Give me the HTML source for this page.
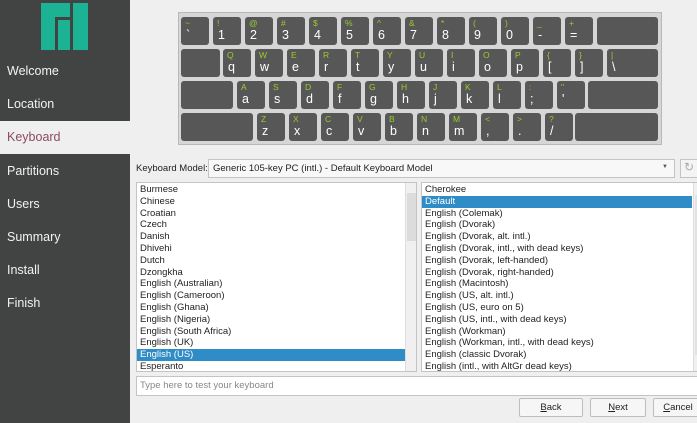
<!DOCTYPE html>
<html><head><meta charset="utf-8">
<style>
*{box-sizing:border-box;margin:0;padding:0}
body{width:697px;height:423px;overflow:hidden;background:#efefef;font-family:"Liberation Sans",sans-serif;position:relative}
.sb{position:absolute;left:0;top:0;width:130px;height:423px;background:#424443}
.nav{position:absolute;left:7px;font-size:12.5px;color:#f2f2f2}
.sel{position:absolute;left:0;top:121px;width:130px;height:33px;background:#efefef}
.kb{position:absolute;left:178px;top:12px;width:484px;height:133px;background:#d6d6d6;border:1px solid #b8b8b8}
.k{position:absolute;width:28px;height:28px;background:#575757;border-radius:3px;color:#fff}
.k .u{position:absolute;left:4px;top:1px;font-size:8.5px;color:#9ccc2c}
.k .l{position:absolute;left:5px;top:11px;font-size:12.5px}
.lbl{position:absolute;font-size:9.5px;color:#222}
.box{position:absolute;background:#fff;border:1px solid #c4c4c4}
.it{position:absolute;left:3px;font-size:9.5px;color:#222;white-space:nowrap;height:12px;line-height:12px}
.hl{position:absolute;background:#308cc6;height:12px}
.btn{position:absolute;top:398px;height:19px;background:#f6f6f6;border:1px solid #bdbdbd;border-radius:2px;font-size:9.5px;text-align:center;line-height:17px;color:#222}
</style></head><body>
<div class="sb"></div>
<svg style="position:absolute;left:41px;top:3px" width="47" height="47"><rect x="0" y="0" width="14" height="47" fill="#1bb394"/><rect x="0" y="0" width="29" height="14" fill="#1bb394"/><rect x="17" y="17" width="12" height="30" fill="#1bb394"/><rect x="32" y="0" width="15" height="47" fill="#1bb394"/></svg>
<div class="sel"></div>
<div class="nav" style="top:64px">Welcome</div>
<div class="nav" style="top:97px">Location</div>
<div class="nav" style="top:130px;color:#8e4b5e">Keyboard</div>
<div class="nav" style="top:164px">Partitions</div>
<div class="nav" style="top:197px">Users</div>
<div class="nav" style="top:230px">Summary</div>
<div class="nav" style="top:263px">Install</div>
<div class="nav" style="top:296px">Finish</div>

<div class="kb"></div>
<div id="keys"></div>

<div class="lbl" style="left:136px;top:163px">Keyboard Model:</div>
<div class="box" style="left:208px;top:159px;width:467px;height:19px;background:#f8f8f8"><span class="it" style="top:3px;left:4px">Generic 105-key PC (intl.)  -  Default Keyboard Model</span><span style="position:absolute;right:6px;top:4px;font-size:6px;color:#555">▼</span></div>
<div class="box" style="left:680px;top:159px;width:20px;height:19px;background:#f4f4f4"><span style="position:absolute;left:3px;top:0;font-size:12px;color:#aaa">↻</span></div>

<div class="box" style="left:136px;top:182px;width:281px;height:190px" id="L">
 <div style="position:absolute;right:0;top:0;width:11px;height:188px;background:#f0f0f0;border-left:1px solid #ddd"><div style="position:absolute;left:1px;top:10px;width:9px;height:48px;background:#dcdcdc"></div></div>
</div>
<div class="box" style="left:421px;top:182px;width:280px;height:190px" id="R">
 <div style="position:absolute;left:271px;top:0;width:10px;height:188px;background:#f0f0f0;border-left:1px solid #ddd"><div style="position:absolute;left:1px;top:12px;width:8px;height:160px;background:#e2e2e2"></div></div>
</div>

<div class="box" style="left:136px;top:376px;width:565px;height:20px"><span class="it" style="top:3px;color:#888">Type here to test your keyboard</span></div>
<div class="btn" style="left:519px;width:64px"><u>B</u>ack</div>
<div class="btn" style="left:590px;width:56px"><u>N</u>ext</div>
<div class="btn" style="left:653px;width:50px"><u>C</u>ancel</div>

<script>
var K=document.getElementById('keys'),h='';
function key(x,y,w,u,l){h+='<div class="k" style="left:'+x+'px;top:'+y+'px;width:'+w+'px"><span class="u">'+u+'</span><span class="l">'+l+'</span></div>';}
var r1=[['~','`'],['!','1'],['@','2'],['#','3'],['$','4'],['%','5'],['^','6'],['&amp;','7'],['*','8'],['(','9'],[')','0'],['_','-'],['+','=']];
r1.forEach(function(k,i){key(181+32*i,17,28,k[0],k[1]);});key(597,17,61,'','');
key(181,49,39,'','');
var r2=[['Q','q'],['W','w'],['E','e'],['R','r'],['T','t'],['Y','y'],['U','u'],['I','i'],['O','o'],['P','p'],['{','['],['}',']']];
r2.forEach(function(k,i){key(223+32*i,49,28,k[0],k[1]);});key(607,49,51,'|','\\');
key(181,81,52,'','');
var r3=[['A','a'],['S','s'],['D','d'],['F','f'],['G','g'],['H','h'],['J','j'],['K','k'],['L','l'],[':',';'],['"',"'"]];
r3.forEach(function(k,i){key(237+32*i,81,28,k[0],k[1]);});key(588,81,70,'','');
key(181,113,72,'','');
var r4=[['Z','z'],['X','x'],['C','c'],['V','v'],['B','b'],['N','n'],['M','m'],['&lt;',','],['&gt;','.'],['?','/']];
r4.forEach(function(k,i){key(257+32*i,113,28,k[0],k[1]);});key(575,113,83,'','');
K.innerHTML=h;
var L=['Burmese','Chinese','Croatian','Czech','Danish','Dhivehi','Dutch','Dzongkha','English (Australian)','English (Cameroon)','English (Ghana)','English (Nigeria)','English (South Africa)','English (UK)','English (US)','Esperanto'];
var R=['Cherokee','Default','English (Colemak)','English (Dvorak)','English (Dvorak, alt. intl.)','English (Dvorak, intl., with dead keys)','English (Dvorak, left-handed)','English (Dvorak, right-handed)','English (Macintosh)','English (US, alt. intl.)','English (US, euro on 5)','English (US, intl., with dead keys)','English (Workman)','English (Workman, intl., with dead keys)','English (classic Dvorak)','English (intl., with AltGr dead keys)'];
function fill(id,arr,sel,w){var e=document.getElementById(id),s='';arr.forEach(function(t,i){var y=1+i*11.8;if(i==sel)s+='<div class="hl" style="left:0;top:'+y+'px;width:'+w+'px"></div>';s+='<div class="it" style="top:'+y+'px;'+(i==sel?'color:#fff':'')+'">'+t+'</div>';});e.insertAdjacentHTML('beforeend',s);}
fill('L',L,14,268);fill('R',R,1,270);
</script>
</body></html>
